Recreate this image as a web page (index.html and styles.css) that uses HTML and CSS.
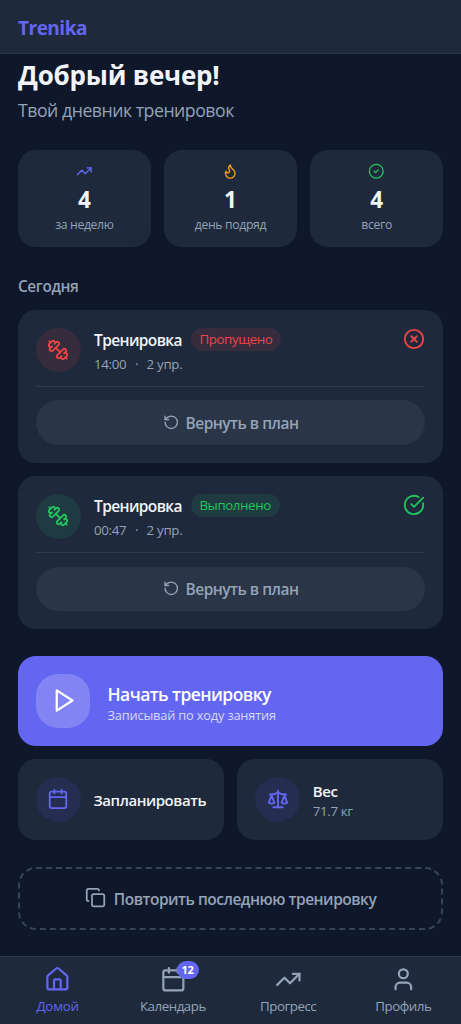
FILE: index.html
```html
<!DOCTYPE html>
<html lang="ru">
<head>
<meta charset="utf-8">
<meta name="viewport" content="width=device-width, initial-scale=1">
<title>Trenika</title>
<link rel="stylesheet" href="styles.css">
</head>
<body>
<svg class="sprite" aria-hidden="true">
  <symbol id="trend" viewBox="0 0 24 24"><path d="M16 7h6v6"/><path d="m22 7-8.5 8.5-5-5L2 17"/></symbol>
  <symbol id="flame" viewBox="0 0 24 24"><path d="M8.5 14.5A2.5 2.5 0 0 0 11 12c0-1.38-.5-2-1-3-1.072-2.143-.224-4.054 2-6 .5 2.5 2 4.9 4 6.5 2 1.6 3 3.5 3 5.5a7 7 0 1 1-14 0c0-1.153.433-2.294 1-3a2.5 2.5 0 0 0 2.5 2.5z"/></symbol>
  <symbol id="check" viewBox="0 0 24 24"><circle cx="12" cy="12" r="10"/><path d="m9 12 2 2 4-4"/></symbol>
  <symbol id="check-big" viewBox="0 0 24 24"><path d="M21.801 10A10 10 0 1 1 17 3.335"/><path d="m9 11 3 3L22 4"/></symbol>
  <symbol id="cross" viewBox="0 0 24 24"><circle cx="12" cy="12" r="10"/><path d="m15 9-6 6"/><path d="m9 9 6 6"/></symbol>
  <symbol id="dumbbell" viewBox="0 0 24 24"><path d="M14.4 14.4 9.6 9.6"/><path d="M18.657 21.485a2 2 0 1 1-2.829-2.828l-1.767 1.768a2 2 0 1 1-2.829-2.829l6.364-6.364a2 2 0 1 1 2.829 2.829l-1.768 1.767a2 2 0 1 1 2.828 2.829z"/><path d="m21.5 21.5-1.4-1.4"/><path d="M3.9 3.9 2.5 2.5"/><path d="M6.404 12.768a2 2 0 1 1-2.829-2.829l1.768-1.767a2 2 0 1 1-2.828-2.829l2.828-2.828a2 2 0 1 1 2.829 2.828l1.767-1.768a2 2 0 1 1 2.829 2.829z"/></symbol>
  <symbol id="undo" viewBox="0 0 24 24"><path d="M3 12a9 9 0 1 0 9-9 9.75 9.75 0 0 0-6.74 2.74L3 8"/><path d="M3 3v5h5"/></symbol>
  <symbol id="play" viewBox="0 0 24 24"><path d="m6 3 14 9-14 9z"/></symbol>
  <symbol id="calendar" viewBox="0 0 24 24"><path d="M8 2v4"/><path d="M16 2v4"/><rect width="18" height="18" x="3" y="4" rx="2"/><path d="M3 10h18"/></symbol>
  <symbol id="scale" viewBox="0 0 24 24"><path d="m16 16 3-8 3 8c-.87.65-1.92 1-3 1s-2.13-.35-3-1Z"/><path d="m2 16 3-8 3 8c-.87.65-1.92 1-3 1s-2.13-.35-3-1Z"/><path d="M7 21h10"/><path d="M12 3v18"/><path d="M3 7h2c2 0 5-1 7-2 2 1 5 2 7 2h2"/></symbol>
  <symbol id="copy" viewBox="0 0 24 24"><rect width="14" height="14" x="8" y="8" rx="2"/><path d="M4 16c-1.1 0-2-.9-2-2V4c0-1.100.9-2 2-2h10c1.100 0 2 .9 2 2"/></symbol>
  <symbol id="home" viewBox="0 0 24 24"><path d="M15 21v-8a1 1 0 0 0-1-1h-4a1 1 0 0 0-1 1v8"/><path d="M3 10a2 2 0 0 1 .709-1.528l7-5.999a2 2 0 0 1 2.582 0l7 5.999A2 2 0 0 1 21 10v9a2 2 0 0 1-2 2H5a2 2 0 0 1-2-2z"/></symbol>
  <symbol id="user" viewBox="0 0 24 24"><path d="M19 21v-2a4 4 0 0 0-4-4H9a4 4 0 0 0-4 4v2"/><circle cx="12" cy="7" r="4"/></symbol>
</svg>
<div class="app">
  <header class="topbar"><span class="brand">Trenika</span></header>
  <main class="content">
    <h1 class="greeting">Добрый вечер!</h1>
    <p class="subtitle">Твой дневник тренировок</p>
    <section class="stats">
      <div class="stat"><svg class="icon indigo"><use href="#trend"/></svg><b class="stat-value">4</b><span class="stat-label">за неделю</span></div>
      <div class="stat"><svg class="icon amber"><use href="#flame"/></svg><b class="stat-value">1</b><span class="stat-label">день подряд</span></div>
      <div class="stat"><svg class="icon green"><use href="#check"/></svg><b class="stat-value">4</b><span class="stat-label">всего</span></div>
    </section>
    <h2 class="section-title">Сегодня</h2>
    <section class="workouts">
      <article class="workout missed">
        <div class="workout-head">
          <div class="bubble"><svg class="icon"><use href="#dumbbell"/></svg></div>
          <div class="workout-info">
            <div class="workout-title"><span class="name">Тренировка</span><span class="pill">Пропущено</span></div>
            <div class="meta"><span>14:00</span><span>·</span><span>2 упр.</span></div>
          </div>
          <svg class="icon status"><use href="#cross"/></svg>
        </div>
        <button class="restore"><svg class="icon"><use href="#undo"/></svg><span>Вернуть в план</span></button>
      </article>
      <article class="workout done">
        <div class="workout-head">
          <div class="bubble"><svg class="icon"><use href="#dumbbell"/></svg></div>
          <div class="workout-info">
            <div class="workout-title"><span class="name">Тренировка</span><span class="pill">Выполнено</span></div>
            <div class="meta"><span>00:47</span><span>·</span><span>2 упр.</span></div>
          </div>
          <svg class="icon status"><use href="#check-big"/></svg>
        </div>
        <button class="restore"><svg class="icon"><use href="#undo"/></svg><span>Вернуть в план</span></button>
      </article>
    </section>
    <button class="start">
      <span class="start-icon"><svg class="icon"><use href="#play"/></svg></span>
      <span class="start-text"><span class="start-title">Начать тренировку</span><span class="start-note">Записывай по ходу занятия</span></span>
    </button>
    <section class="tiles">
      <div class="tile"><div class="bubble"><svg class="icon"><use href="#calendar"/></svg></div><div class="tile-text"><div class="tile-name">Запланировать</div></div></div>
      <div class="tile"><div class="bubble"><svg class="icon"><use href="#scale"/></svg></div><div class="tile-text"><div class="tile-name">Вес</div><div class="tile-note">71.7 кг</div></div></div>
    </section>
    <button class="repeat"><svg class="icon"><use href="#copy"/></svg><span>Повторить последнюю тренировку</span></button>
  </main>
  <nav class="tabs">
    <a class="tab active"><svg class="icon"><use href="#home"/></svg><span>Домой</span></a>
    <a class="tab"><span class="tab-icon"><svg class="icon"><use href="#calendar"/></svg><i class="badge">12</i></span><span>Календарь</span></a>
    <a class="tab"><svg class="icon"><use href="#trend"/></svg><span>Прогресс</span></a>
    <a class="tab"><svg class="icon"><use href="#user"/></svg><span>Профиль</span></a>
  </nav>
</div>
</body>
</html>
```
FILE: styles.css
```css
* { box-sizing: border-box; }
body {
  margin: 0;
  background: #0f172a;
  color: #f1f5f9;
  font-family: "Open Sans", "Noto Sans", sans-serif;
  font-size: 15.5px;
  white-space: nowrap;
}
h1, h2, p { margin: 0; }
button { font: inherit; border: 0; padding: 0; margin: 0; }
.sprite { display: none; }
.icon {
  display: block;
  flex: none;
  fill: none;
  stroke: currentColor;
  stroke-width: 2;
  stroke-linecap: round;
  stroke-linejoin: round;
}
.app { height: 1024px; display: flex; flex-direction: column; overflow: hidden; }
.topbar {
  height: 54px;
  flex: none;
  padding: 0 18px;
  display: flex;
  align-items: center;
  background: #1e293b;
  border-bottom: 1px solid #2d394b;
}
.brand { color: #6366f1; font-size: 19px; font-weight: 700; line-height: 26px; padding-top: 2px; letter-spacing: -0.5px; }
.content { flex: 1; min-height: 0; padding: 4px 18px 0; display: flex; flex-direction: column; }
.greeting { font-size: 26px; line-height: 35px; font-weight: 700; letter-spacing: -0.2px; }
.subtitle { margin-top: 4px; font-size: 17.7px; line-height: 27px; color: #94a3b8; letter-spacing: -0.48px; }
.stats { display: grid; grid-template-columns: repeat(3, 1fr); gap: 13.4px; margin-top: 25.5px; }
.stat {
  height: 97px;
  border-radius: 18px;
  background: #1e293b;
  display: flex;
  flex-direction: column;
  align-items: center;
  padding-top: 13px;
}
.stat .icon { width: 16.5px; height: 16.5px; }
.stat-value { font-size: 22.5px; line-height: 32px; margin-top: 4.8px; }
.stat-label { font-size: 12.2px; line-height: 18px; color: #94a3b8; letter-spacing: -0.33px; margin-top: 0.5px; }
.indigo { color: #6366f1; }
.amber { color: #f59e0b; }
.green { color: #22c55e; }
.section-title { margin-top: 29px; font-size: 15.3px; line-height: 21px; font-weight: 600; color: #94a3b8; letter-spacing: -0.35px; }
.workouts { display: grid; gap: 13.5px; margin-top: 13px; }
.workout { height: 153px; border-radius: 18px; background: #1e293b; padding: 18px; }
.workout-head { display: flex; height: 59px; border-bottom: 1px solid #2f3b4d; }
.bubble { width: 44.5px; height: 44.5px; flex: none; border-radius: 50%; display: flex; align-items: center; justify-content: center; }
.bubble .icon { width: 22px; height: 22px; }
.missed .bubble, .missed .pill { background: #352c3d; color: #ef4444; }
.done .bubble, .done .pill { background: #1f3a40; color: #22c55e; }
.workout-info { flex: 1; margin-left: 13.5px; }
.workout-title { display: flex; align-items: center; height: 23px; gap: 9px; }
.name { font-weight: 600; font-size: 15.5px; letter-spacing: -0.62px; padding-top: 1px; }
.pill { height: 23px; line-height: 23px; border-radius: 12px; padding: 0 9px 0 8.500px; font-size: 13.3px; letter-spacing: -0.4px; }
.meta { display: flex; gap: 8.500px; font-size: 13.3px; line-height: 19px; margin-top: 4px; color: #94a3b8; letter-spacing: -0.3px; }
.status { width: 22px; height: 22px; color: #ef4444; }
.done .status { color: #22c55e; }
.restore {
  width: 100%;
  height: 44.5px;
  margin-top: 13.5px;
  padding-top: 1px;
  border-radius: 23px;
  background: #2a3547;
  color: #94a3b8;
  display: flex;
  align-items: center;
  justify-content: center;
  gap: 6.5px;
  font-size: 15.5px;
  font-weight: 600;
  letter-spacing: -0.52px;
}
.restore .icon { width: 16.5px; height: 16.5px; margin-bottom: 2px; }
.start {
  height: 89.5px;
  flex: none;
  margin-top: 27px;
  border-radius: 18px;
  background: #6366f1;
  color: #fff;
  display: flex;
  align-items: center;
  padding: 0 18px;
  gap: 17.5px;
  text-align: left;
}
.start-icon { width: 54px; height: 54px; border-radius: 22px; background: #8284f4; display: flex; align-items: center; justify-content: center; }
.start-icon .icon { width: 27px; height: 27px; }
.start-text { display: grid; padding-top: 4.5px; }
.start-title { font-size: 17.5px; line-height: 24px; font-weight: 600; letter-spacing: -0.57px; }
.start-note { font-size: 12.8px; line-height: 19px; color: #d8d9fc; letter-spacing: -0.17px; }
.tiles { display: grid; grid-template-columns: repeat(2, minmax(0, 1fr)); gap: 13.5px; margin-top: 13.5px; }
.tile { height: 80.5px; border-radius: 18px; background: #1e293b; display: flex; align-items: center; padding: 0 18px; gap: 13px; }
.tile .bubble { background: #252d50; color: #6366f1; }
.tile-text { padding-top: 2.500px; }
.tile-name { font-size: 15px; line-height: 21px; font-weight: 600; letter-spacing: -0.43px; }
.tile-note { font-size: 13.3px; line-height: 19px; color: #94a3b8; letter-spacing: -0.35px; }
.repeat {
  height: 63px;
  flex: none;
  margin-top: 27px;
  padding-top: 1px;
  border: 2px dashed #374456;
  border-radius: 18px;
  background: none;
  color: #94a3b8;
  display: flex;
  align-items: center;
  justify-content: center;
  gap: 8px;
  font-size: 15.5px;
  font-weight: 600;
  letter-spacing: -0.49px;
}
.repeat .icon { width: 21px; height: 21px; margin-bottom: 2.5px; }
.tabs {
  height: 68px;
  flex: none;
  border-top: 1px solid #2d394b;
  background: #1e293b;
  display: grid;
  grid-template-columns: repeat(4, 1fr);
}
.tab { display: flex; flex-direction: column; align-items: center; padding-top: 8.5px; color: #94a3b8; font-size: 13.3px; line-height: 19px; gap: 5px; letter-spacing: -0.45px; }
.tab.active { color: #6366f1; letter-spacing: -0.2px; }
.tab .icon { width: 26.7px; height: 26.7px; }
.tab-icon { position: relative; }
.badge {
  position: absolute;
  left: 17px;
  top: -4.5px;
  width: 22px;
  height: 18px;
  border-radius: 9px;
  background: #6366f1;
  color: #fff;
  font: 700 11px/18px "Open Sans", sans-serif;
  letter-spacing: -0.3px;
  text-align: center;
}
```
